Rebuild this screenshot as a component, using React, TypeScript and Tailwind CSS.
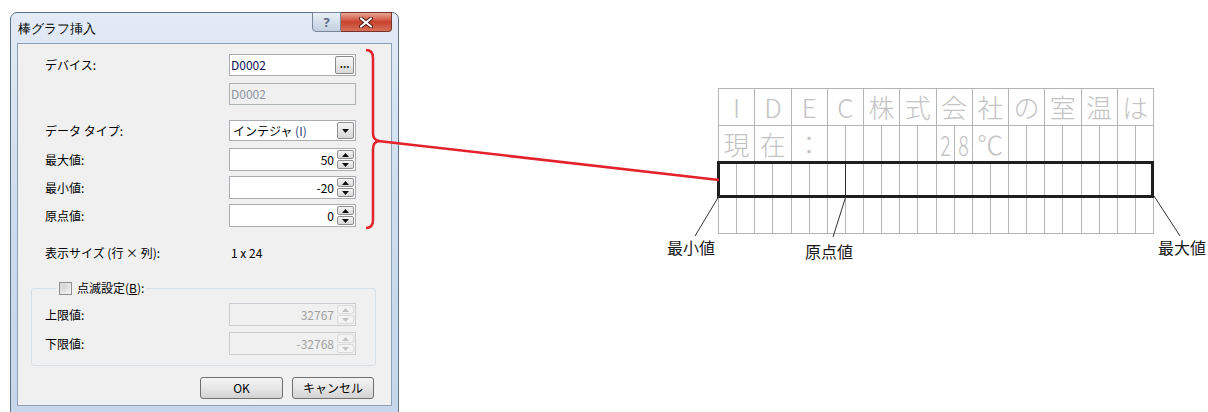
import React from "react";

const ui = "font-['Noto_Sans_CJK_JP','Noto_Sans',sans-serif]";

function Arrow({ dir, color }: { dir: "up" | "down"; color: string }) {
  return (
    <svg width="7" height="4" viewBox="0 0 7 4">
      <path d={dir === "up" ? "M0 4 L3.5 0 L7 4Z" : "M0 0 L3.5 4 L7 0Z"} fill={color} />
    </svg>
  );
}

function SpinBtn({ dir, disabled }: { dir: "up" | "down"; disabled?: boolean }) {
  return (
    <div
      className={`flex flex-1 items-center justify-center rounded-[2px] border ${
        disabled
          ? "border-[#dadada] bg-[#f3f3f3]"
          : "border-[#8e8f8f] bg-gradient-to-b from-[#f6f6f6] to-[#d9d9d9]"
      }`}
    >
      <Arrow dir={dir} color={disabled ? "#c2c2c2" : "#111"} />
    </div>
  );
}

function SpinField({ value, disabled }: { value: string; disabled?: boolean }) {
  return (
    <div
      className={`flex h-[23px] w-[127px] border p-px ${
        disabled ? "border-[#c9cdd1] bg-[#f0f0f0]" : "border-[#abadb3] bg-white"
      }`}
    >
      <span
        className={`flex-1 pr-[3px] text-right text-[12px] leading-[19px] ${
          disabled ? "text-[#a0a0a0]" : "text-black"
        }`}
      >
        {value}
      </span>
      <div className="flex w-[17px] flex-col gap-px">
        <SpinBtn dir="up" disabled={disabled} />
        <SpinBtn dir="down" disabled={disabled} />
      </div>
    </div>
  );
}

function Row({ label, children, w = "w-[184px]" }: { label: string; children: React.ReactNode; w?: string }) {
  return (
    <div className="flex items-center">
      <span className={`${w} text-[12px] leading-[16px] text-black`}>{label}</span>
      {children}
    </div>
  );
}

function Dialog() {
  return (
    <div className="ml-[10px] mt-[12px] h-[402px] w-[389px] rounded-t-[7px] border border-[#5f7185] bg-gradient-to-b from-[#e2ebf6] via-[#cddcee] to-[#c6d7ec] px-[6px]">
      {/* title bar */}
      <div className="flex h-[30px] items-start justify-between">
        <span className="self-center pl-px text-[13px] leading-[18px] text-black">棒グラフ挿入</span>
        <div className="-mt-px flex">
          <div className="flex h-[20px] w-[29px] items-center justify-center rounded-bl-[4px] border border-[#7a8799] bg-gradient-to-b from-[#e9eff7] to-[#c3d0e1] text-[13px] font-bold leading-none text-[#5a687e]">
            ?
          </div>
          <div className="flex h-[20px] w-[51px] items-center justify-center rounded-br-[4px] border border-l-0 border-[#7b3328] bg-gradient-to-b from-[#e8a596] via-[#c8422d] to-[#d5705c]">
            <svg width="14" height="11" viewBox="0 0 14 11">
              <path d="M2 1.5 L12 9.5 M12 1.5 L2 9.5" stroke="#4a1a12" strokeWidth="4" strokeLinecap="round" />
              <path d="M2 1.5 L12 9.5 M12 1.5 L2 9.5" stroke="#ffffff" strokeWidth="2.2" strokeLinecap="round" />
            </svg>
          </div>
        </div>
      </div>

      {/* client */}
      <div className={`flex h-[363px] flex-col border border-[#8e9fb3] bg-[#f0f0f0] pt-[10px] ${ui}`}>
        <div className="flex flex-col pl-[27px]">
          <Row label="デバイス:">
            <div className="flex h-[22px] w-[127px] items-center border border-[#abadb3] bg-white pl-px pr-px">
              <span className="flex-1 text-[12px] leading-[16px] text-[#10105a]">D0002</span>
              <div className="flex h-[18px] w-[19px] items-center justify-center rounded-[2px] border border-[#8a8a8a] bg-gradient-to-b from-[#f8f8f8] to-[#d8d8d8] pb-[3px] text-[10px] font-bold leading-none text-[#222]">
                ...
              </div>
            </div>
          </Row>
          <div className="mt-[7px] flex">
            <div className="ml-[184px] h-[22px] w-[127px] border border-[#adb2b5] bg-[#f0f0f0] pl-px text-[12px] leading-[20px] text-[#8d95a0]">
              D0002
            </div>
          </div>
          <div className="mt-[15px]">
            <Row label="データ タイプ:">
              <div className="flex h-[21px] w-[127px] items-center border border-[#abadb3] bg-white p-px">
                <span className="flex-1 pl-[2px] text-[12px] leading-[16px] text-black">
                  インテジャ <span className="text-[#26397a]">(I)</span>
                </span>
                <div className="flex h-[17px] w-[17px] items-center justify-center rounded-[2px] border border-[#8e8f8f] bg-gradient-to-b from-[#f6f6f6] to-[#d6d6d6]">
                  <Arrow dir="down" color="#111" />
                </div>
              </div>
            </Row>
          </div>
          <div className="mt-[7px] flex flex-col gap-[5px]">
            <Row label="最大値:">
              <SpinField value="50" />
            </Row>
            <Row label="最小値:">
              <SpinField value="-20" />
            </Row>
            <Row label="原点値:">
              <SpinField value="0" />
            </Row>
          </div>
          <div className="mt-[18px]">
            <Row label="表示サイズ (行 × 列):" w="w-[186px]">
              <span className="text-[12px] leading-[16px] text-black">1 x 24</span>
            </Row>
          </div>
        </div>

        <fieldset className="ml-[13px] mt-[19px] w-[345px] rounded-[3px] border border-[#d5dfe5] pb-[10px]">
          <legend className="ml-[24px] px-[3px]">
            <span className="flex items-center gap-[5px] text-[12px] leading-[16px] text-black">
              <span className="h-[13px] w-[13px] border border-[#8e8f8f] bg-gradient-to-br from-[#d8d8d8] to-[#f4f4f4] p-[2px]">
                <span className="block h-full w-full bg-gradient-to-br from-[#cfcfcf] to-[#ececec]" />
              </span>
              <span>
                点滅設定(<span className="underline">B</span>):
              </span>
            </span>
          </legend>
          <div className="mt-[7px] flex flex-col gap-[6px] pl-[13px]">
            <Row label="上限値:">
              <SpinField value="32767" disabled />
            </Row>
            <Row label="下限値:">
              <SpinField value="-32768" disabled />
            </Row>
          </div>
        </fieldset>

        <div className="mt-[11px] flex justify-end gap-[9px] pr-[17px]">
          <div className="flex h-[22px] w-[83px] items-center justify-center rounded-[3px] border border-[#707070] bg-gradient-to-b from-[#f3f3f3] via-[#e6e6e6] to-[#d2d2d2] text-[12px] leading-none text-black">
            OK
          </div>
          <div className="flex h-[22px] w-[82px] items-center justify-center rounded-[3px] border border-[#707070] bg-gradient-to-b from-[#f3f3f3] via-[#e6e6e6] to-[#d2d2d2] text-[12px] leading-none text-black">
            キャンセル
          </div>
        </div>
      </div>
    </div>
  );
}

const cellText = "flex items-center justify-center border-b border-r border-[#b5b5b5] text-[26px] font-light leading-none text-[#c3c3c3]";

const row1 = ["I", "D", "E", "C", "株", "式", "会", "社", "の", "室", "温", "は"];
const row2: { t: string; span?: boolean; narrow?: boolean }[] = [
  { t: "現", span: true },
  { t: "在", span: true },
  { t: "：", span: true },
  ...Array.from({ length: 6 }, () => ({ t: "" })),
  { t: "2", narrow: true },
  { t: "8", narrow: true },
  { t: "℃", span: true },
  ...Array.from({ length: 8 }, () => ({ t: "" })),
];

function Diagram() {
  return (
    <div className={`relative ml-[319px] mt-[88px] w-[436px] ${ui}`}>
      <div className="border-l border-t border-[#b5b5b5]">
        <div className="grid h-[37px] grid-cols-12">
          {row1.map((c, i) => (
            <div key={i} className={cellText}>
              {c}
            </div>
          ))}
        </div>
        <div className="grid h-[36px] grid-cols-24">
          {row2.map((c, i) => (
            <div key={i} className={`${cellText} ${c.span ? "col-span-2" : ""}`}>
              {c.narrow ? <span className="inline-block scale-x-[0.7] text-[28px]">{c.t}</span> : c.t}
            </div>
          ))}
        </div>
        <div className="relative grid h-[35px] grid-cols-24">
          {Array.from({ length: 24 }, (_, i) => (
            <div
              key={i}
              className={`border-b border-r border-[#b5b5b5] ${i === 6 ? "border-r-[#2a2a2a]" : ""}`}
            />
          ))}
          <div className="absolute -left-[2px] -top-[1px] bottom-[-1px] right-0 border-[3px] border-[#1f1f1f]" />
        </div>
        <div className="grid h-[37px] grid-cols-24">
          {Array.from({ length: 24 }, (_, i) => (
            <div key={i} className="border-b border-r border-[#b5b5b5]" />
          ))}
        </div>
      </div>

      <span className="absolute left-[-51px] top-[149px] whitespace-nowrap text-[16px] leading-[20px] text-[#1a1a1a]">最小値</span>
      <span className="absolute left-[87px] top-[153px] whitespace-nowrap text-[16px] leading-[20px] text-[#1a1a1a]">原点値</span>
      <span className="absolute left-[440px] top-[149px] whitespace-nowrap text-[16px] leading-[20px] text-[#1a1a1a]">最大値</span>
    </div>
  );
}

export default function App() {
  return (
    <div className="relative h-[412px] w-[1208px] overflow-hidden bg-white">
      <div className="flex items-start">
        <Dialog />
        <Diagram />
      </div>

      {/* connectors */}
      <svg className="pointer-events-none absolute left-0 top-0" width="1208" height="412">
        <path
          d="M366 50 Q373 50 373 58 L373 133 Q373 140 379 141 Q373 142 373 149 L373 220 Q373 228 366 228"
          fill="none"
          stroke="#e3222b"
          strokeWidth="2.5"
        />
        <line x1="378" y1="141" x2="719" y2="180" stroke="#e3222b" strokeWidth="2.5" />
        <line x1="719" y1="196" x2="695" y2="236" stroke="#333" strokeWidth="1" />
        <line x1="846" y1="196" x2="833" y2="237" stroke="#333" strokeWidth="1" />
        <line x1="1154" y1="196" x2="1180" y2="236" stroke="#333" strokeWidth="1" />
      </svg>
    </div>
  );
}
